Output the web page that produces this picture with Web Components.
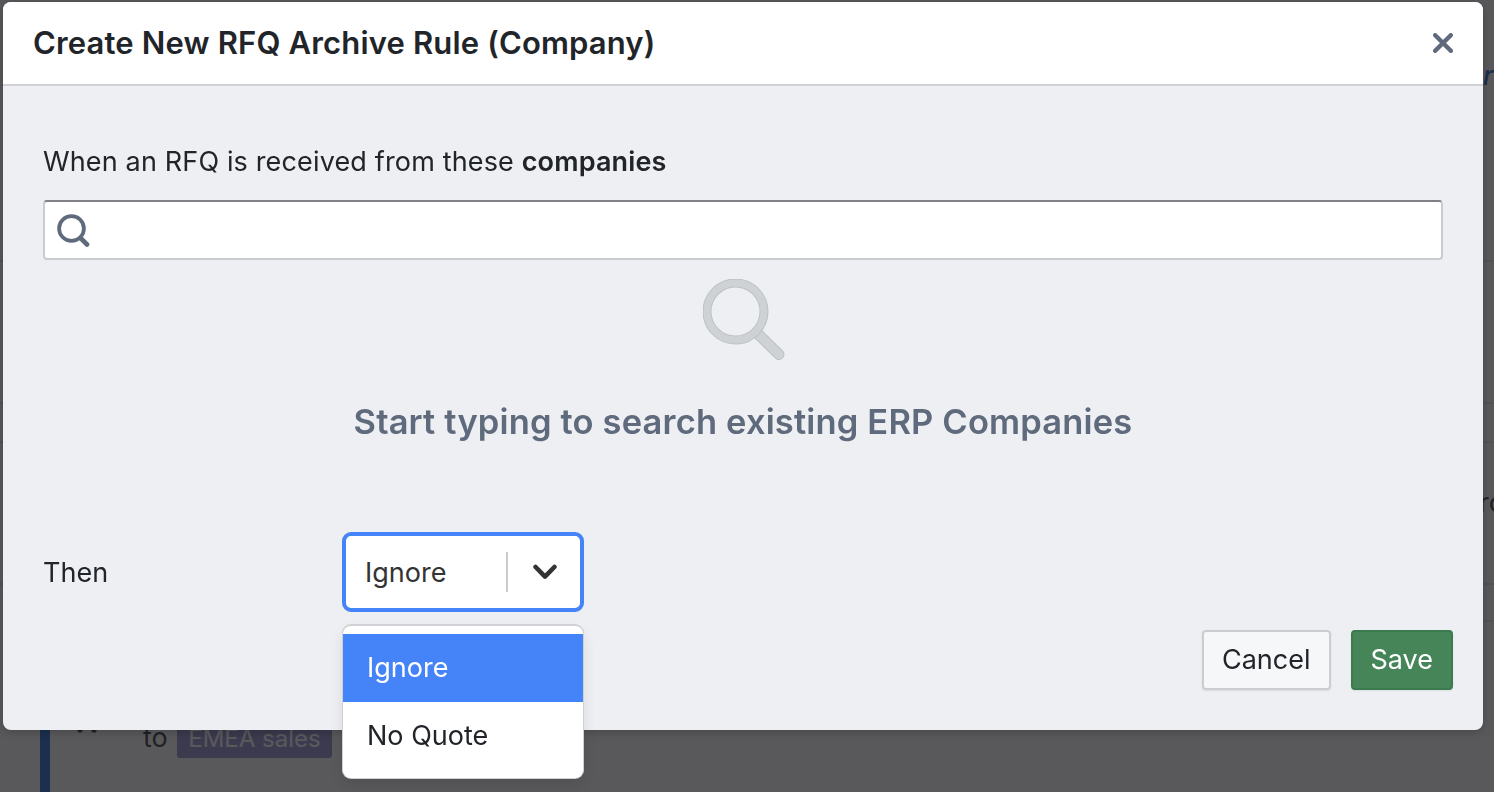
<!doctype html>
<html lang="en">
<head>
<meta charset="utf-8">
<title>Create New RFQ Archive Rule</title>
<style>
  html, body { margin: 0; height: 100%; overflow: hidden; }
  body { background: #fff; color: #212529; font-family: Inter, "Liberation Sans", sans-serif; }
</style>
</head>
<body>
<rfq-page></rfq-page>
<rfq-overlay>
  <rfq-modal heading="Create New RFQ Archive Rule (Company)">
    <rfq-field>When an RFQ is received from these <b>companies</b></rfq-field>
    <rfq-search></rfq-search>
    <rfq-empty>Start typing to search existing ERP Companies</rfq-empty>
    <rfq-then label="Then">
      <rfq-select value="Ignore" options="Ignore,No Quote"></rfq-select>
    </rfq-then>
    <rfq-actions>
      <rfq-button>Cancel</rfq-button>
      <rfq-button kind="save">Save</rfq-button>
    </rfq-actions>
  </rfq-modal>
</rfq-overlay>

<script>
  // page behind the dialog, only its edges are visible
  class RfqPage extends HTMLElement {
    constructor() {
      super();
      this.attachShadow({ mode: 'open' });
      this.shadowRoot.innerHTML = `
        <style>
          :host { display: block; height: 792px; overflow: hidden; font-size: 27px; white-space: nowrap; }
          .edge { height: 60px; padding: 2px 0 0 1483px; box-sizing: border-box; margin-top: 58px; line-height: 32px; color: #0d5dc5; font-style: italic; font-weight: 500; }
          .line { border-top: 2px solid #e4e4ea; }
          .r1 { height: 140px; margin-top: 142px; }
          .r2 { height: 37px; }
          .r3 { height: 142px; padding: 42px 0 0 1479px; box-sizing: border-box; line-height: 36px; }
          .r4 { height: 35px; }
          .last { margin-left: 40px; border-left: 10px solid #0d5dc5; height: 200px; padding: 90px 0 0 93px; display: flex; align-items: flex-start; gap: 9px; box-sizing: border-box; }
          .mark { position: absolute; left: 77px; top: 726px; width: 20px; height: 7px; color: #212529; }
          .to { line-height: 36px; margin-top: 8px; }
          .tag { background: #8a85c8; color: #fff; font-size: 24px; line-height: 38px; padding: 0 11.5px; border-radius: 3px; margin-top: 8px; }
        </style>
        <div class="edge">r</div>
        <div class="line r1"></div>
        <div class="line r2"></div>
        <div class="line r3">ro</div>
        <div class="line r4"></div>
        <div class="line last"><span class="to">to</span><span class="tag">EMEA sales</span></div>
        <svg class="mark" viewBox="0 0 20 7" fill="currentColor"><circle cx="3" cy="4" r="2.6"/><circle cx="17" cy="4" r="2.6"/></svg>
      `;
    }
  }

  class RfqOverlay extends HTMLElement {
    constructor() {
      super();
      this.attachShadow({ mode: 'open' });
      this.shadowRoot.innerHTML = `
        <style>
          :host { display: block; position: fixed; inset: 0; background: rgba(33, 34, 38, .75); padding: 2px 11px 0 3px; }
        </style>
        <slot></slot>
      `;
    }
  }

  class RfqModal extends HTMLElement {
    constructor() {
      super();
      const heading = this.getAttribute('heading') || '';
      this.attachShadow({ mode: 'open' });
      this.shadowRoot.innerHTML = `
        <style>
          :host { display: block; height: 728px; border-radius: 8px; background: #edeff3; box-shadow: 0 2px 10px rgba(0, 0, 0, .22); }
          header { height: 82px; display: flex; align-items: center; justify-content: space-between; padding: 0 30px; background: #fff; border-bottom: 2px solid #cfd1d5; border-radius: 8px 8px 0 0; }
          h2 { margin: 0; font-size: 31px; letter-spacing: .16px; line-height: 40px; font-weight: 600; color: #212529; }
          svg { display: block; }
          .body { padding: 56px 40px 0; }
        </style>
        <header>
          <h2>${heading}</h2>
          <svg width="20" height="20" viewBox="0 0 20 20" fill="none" stroke="#5f6b7c" stroke-width="4.4" stroke-linecap="round"><path d="M2.2 2.2l15.6 15.6M17.8 2.2L2.2 17.8"/></svg>
        </header>
        <div class="body"><slot></slot></div>
      `;
    }
  }

  class RfqField extends HTMLElement {
    constructor() {
      super();
      this.attachShadow({ mode: 'open' });
      this.shadowRoot.innerHTML = `
        <style>
          :host { display: block; font-size: 27px; letter-spacing: .15px; line-height: 40px; margin-bottom: 18px; }
          ::slotted(b) { font-weight: 600; }
        </style>
        <slot></slot>
      `;
    }
  }

  class RfqSearch extends HTMLElement {
    constructor() {
      super();
      this.attachShadow({ mode: 'open' });
      this.shadowRoot.innerHTML = `
        <style>
          :host { display: flex; align-items: center; box-sizing: border-box; width: 1400px; height: 60px; padding-left: 12px; background: #fff; border: 2px solid #c9cbce; border-top-color: #7f8184; border-radius: 4px; }
          svg { display: block; }
        </style>
        <svg width="33" height="33" viewBox="0 0 33 33" fill="none" stroke="#5f6b7c" stroke-linecap="round"><circle cx="14.5" cy="14.5" r="12.4" stroke-width="3.8"/><path d="M24 24.5l6 6" stroke-width="4.6"/></svg>
      `;
    }
  }

  class RfqEmpty extends HTMLElement {
    constructor() {
      super();
      this.attachShadow({ mode: 'open' });
      this.shadowRoot.innerHTML = `
        <style>
          :host { display: flex; flex-direction: column; align-items: center; padding-top: 19px; }
          svg { display: block; margin-left: 3px; }
          p { margin: 39px 0 0; font-size: 34.5px; letter-spacing: .16px; line-height: 44px; font-weight: 600; color: #5f6b7c; }
        </style>
        <svg width="84" height="82" viewBox="0 0 84 82" fill="none" stroke-linecap="round">
          <path d="M53.5 53.5L76 75.5" stroke="#bdc1c6" stroke-width="11"/>
          <path d="M53.5 53.5L76 75.5" stroke="#cfd2d5" stroke-width="9"/>
          <circle cx="32.5" cy="32.5" r="28.5" stroke="#bdc1c6" stroke-width="9"/>
          <circle cx="32.5" cy="32.5" r="28.5" stroke="#cfd2d5" stroke-width="7"/>
        </svg>
        <p><slot></slot></p>
      `;
    }
  }

  class RfqThen extends HTMLElement {
    constructor() {
      super();
      const label = this.getAttribute('label') || '';
      this.attachShadow({ mode: 'open' });
      this.shadowRoot.innerHTML = `
        <style>
          :host { display: grid; grid-template-columns: 299px auto; align-items: center; justify-content: start; margin-top: 88px; font-size: 27px; }
        </style>
        <span>${label}</span>
        <slot></slot>
      `;
    }
  }

  class RfqSelect extends HTMLElement {
    constructor() {
      super();
      const value = this.getAttribute('value') || '';
      const options = (this.getAttribute('options') || '').split(',');
      const rows = options.map(o => `<li class="${o === value ? 'on' : ''}">${o}</li>`).join('');
      this.attachShadow({ mode: 'open' });
      this.shadowRoot.innerHTML = `
        <style>
          :host { display: block; position: relative; width: 242px; font-size: 27px; }
          .control { display: flex; align-items: center; box-sizing: border-box; height: 80px; padding: 0 23px 0 19px; background: #fff; border: 4px solid #4483f8; border-radius: 9px; color: #333; }
          .value { flex: 1; }
          .sep { width: 2px; height: 40px; background: #cccccc; margin-right: 25px; }
          svg { display: block; }
          ul { position: absolute; left: 1px; right: 1px; top: 94px; margin: 0; padding: 8px 0; list-style: none; background: #fff; border-radius: 8px; box-shadow: 0 0 0 1px #d0d1d5, 0 -1px 0 1px #d0d1d5, 0 6px 14px rgba(0, 0, 0, .1); color: #212529; z-index: 2; }
          li { height: 68px; line-height: 68px; padding-left: 24px; }
          li.on { background: #4483f8; color: #fff; }
        </style>
        <div class="control">
          <span class="value">${value}</span>
          <span class="sep"></span>
          <svg width="24" height="16" viewBox="0 0 24 16" fill="none" stroke="#333" stroke-width="4.6" stroke-linecap="round" stroke-linejoin="round"><path d="M2.6 3l9.4 9.6L21.4 3"/></svg>
        </div>
        <ul>${rows}</ul>
      `;
    }
  }

  class RfqActions extends HTMLElement {
    constructor() {
      super();
      this.attachShadow({ mode: 'open' });
      this.shadowRoot.innerHTML = `
        <style>
          :host { display: flex; justify-content: flex-end; gap: 20px; margin: 18px -10px 0 0; }
        </style>
        <slot></slot>
      `;
    }
  }

  class RfqButton extends HTMLElement {
    constructor() {
      super();
      this.attachShadow({ mode: 'open' });
      this.shadowRoot.innerHTML = `
        <style>
          :host { display: inline-flex; align-items: center; justify-content: center; box-sizing: border-box; min-width: 102px; height: 60px; padding: 0 18px 2px; font-size: 27px; border-radius: 4px; background: #f6f7f9; border: 2px solid #cbcdd0; color: #212529; box-shadow: 0 1px 2px rgba(0, 0, 0, .08); }
          :host([kind="save"]) { background: #458558; border-color: #3c7a4f; color: #fff; }
        </style>
        <slot></slot>
      `;
    }
  }

  customElements.define('rfq-page', RfqPage);
  customElements.define('rfq-overlay', RfqOverlay);
  customElements.define('rfq-modal', RfqModal);
  customElements.define('rfq-field', RfqField);
  customElements.define('rfq-search', RfqSearch);
  customElements.define('rfq-empty', RfqEmpty);
  customElements.define('rfq-then', RfqThen);
  customElements.define('rfq-select', RfqSelect);
  customElements.define('rfq-actions', RfqActions);
  customElements.define('rfq-button', RfqButton);
</script>
</body>
</html>
